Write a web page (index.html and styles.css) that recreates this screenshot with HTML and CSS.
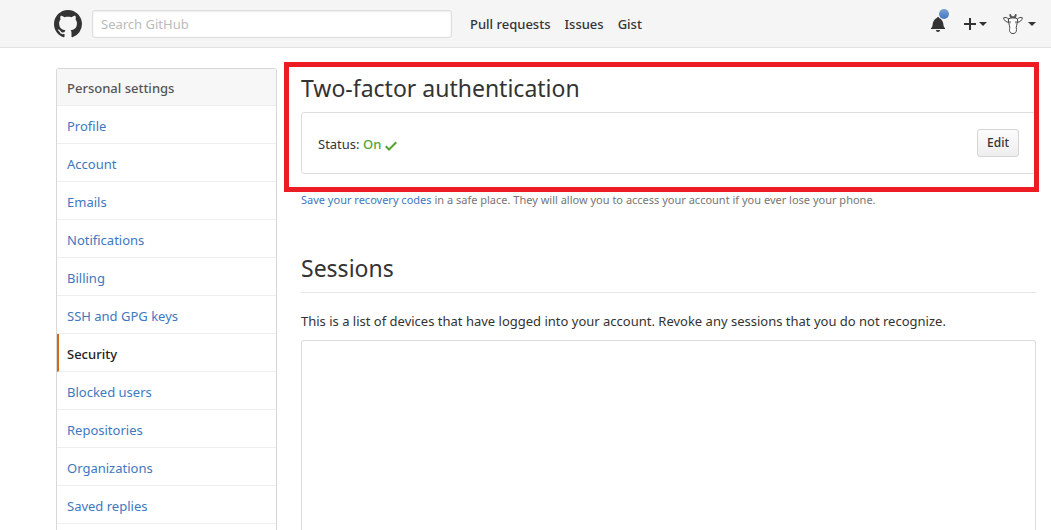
FILE: index.html
```html
<!DOCTYPE html>
<html lang="en">
<head>
<meta charset="utf-8">
<title>Security settings</title>
<link rel="stylesheet" href="styles.css">
</head>
<body>
<header class="topbar">
  <a class="logo" href="#" aria-label="GitHub">
    <svg width="28" height="28" viewBox="0 0 16 16" fill="#333"><path fill-rule="evenodd" d="M8 0C3.58 0 0 3.58 0 8c0 3.54 2.29 6.53 5.47 7.59.4.07.55-.17.55-.38 0-.19-.01-.82-.01-1.49-2.01.37-2.53-.49-2.69-.94-.09-.23-.48-.94-.82-1.13-.28-.15-.68-.52-.01-.53.63-.01 1.08.58 1.23.82.72 1.21 1.87.87 2.33.66.07-.52.28-.87.51-1.07-1.78-.2-3.64-.89-3.64-3.95 0-.87.31-1.59.82-2.15-.08-.2-.36-1.02.08-2.12 0 0 .67-.21 2.2.82.64-.18 1.32-.27 2-.27s1.36.09 2 .27c1.53-1.04 2.2-.82 2.2-.82.44 1.1.16 1.92.08 2.12.51.56.82 1.27.82 2.15 0 3.07-1.87 3.75-3.65 3.95.29.25.54.73.54 1.48 0 1.07-.01 1.93-.01 2.2 0 .21.15.46.55.38A8.01 8.01 0 0 0 16 8c0-4.42-3.58-8-8-8z"/></svg>
  </a>
  <input class="search" type="text" placeholder="Search GitHub" aria-label="Search GitHub">
  <nav class="links">
    <a href="#">Pull requests</a>
    <a href="#">Issues</a>
    <a href="#">Gist</a>
  </nav>
  <div class="user-nav">
    <a class="bell" href="#" aria-label="Notifications">
      <svg width="14" height="16" viewBox="0 0 14 16" fill="#333"><path d="M14 12v1H0v-1l.73-.58c.77-.77.81-2.55 1.19-4.42C2.69 3.23 6 2 6 2c0-.55.45-1 1-1s1 .45 1 1c0 0 3.39 1.23 4.16 5 .38 1.88.42 3.66 1.19 4.42l.66.58H14zm-7 4c1.11 0 2-.89 2-2H5c0 1.11.89 2 2 2z"/></svg>
      <span class="unread"></span>
    </a>
    <button class="menu" type="button" aria-label="Create new">
      <svg width="12" height="12" viewBox="0 0 12 12" fill="#333"><path d="M5 0h2v5h5v2H7v5H5V7H0V5h5z"/></svg>
      <span class="caret"></span>
    </button>
    <button class="menu profile" type="button" aria-label="Your profile">
      <svg width="20" height="22" viewBox="0 0 20 22" fill="#fff" stroke="#444" stroke-linejoin="round" stroke-linecap="round">
        <path d="M5.500 6C4 4.500 2 4 .6 4.800 1 7.300 3 9.300 5.500 9.300zM14.500 6c1.500-1.500 3.500-2 4.900-1.200C19 7.300 17 9.300 14.500 9.300z"/>
        <path d="M5.500 6C7.500 4.200 12.500 4.200 14.500 6c.7 3-1 5.500-1.300 8.500.2 1.500.5 2.500 0 4-.9 2.700-5.500 2.700-6.400 0-.5-1.500-.2-2.500 0-4C6.500 11.500 4.800 9 5.500 6z"/>
        <path d="M8 4.500 7.300 2M12 4.500l.7-2.500M9 4.300h2" stroke="#555" stroke-width="2"/>
        <path d="M7 8.500v1.500M13 8.500v1.500"/>
      </svg>
      <span class="caret"></span>
    </button>
  </div>
</header>
<main class="page">
  <nav class="sidebar" aria-label="Personal settings">
    <h2 class="sidebar-title">Personal settings</h2>
    <a href="#">Profile</a>
    <a href="#">Account</a>
    <a href="#">Emails</a>
    <a href="#">Notifications</a>
    <a href="#">Billing</a>
    <a href="#">SSH and GPG keys</a>
    <a class="selected" href="#" aria-current="page">Security</a>
    <a href="#">Blocked users</a>
    <a href="#">Repositories</a>
    <a href="#">Organizations</a>
    <a href="#">Saved replies</a>
  </nav>
  <div class="content">
    <section class="two-factor">
      <h1 class="title">Two-factor authentication</h1>
      <div class="status-box">
        <span class="status">Status: <span class="on">On</span>
          <svg class="check" width="12" height="16" viewBox="0 0 12 16" fill="#55a532"><path d="M12 5l-8 8-4-4 1.500-1.500L4 10l6.500-6.500z"/></svg></span>
        <button class="btn" type="button">Edit</button>
      </div>
      <div class="highlight"></div>
    </section>
    <p class="note"><a href="#">Save your recovery codes</a> in a safe place. They will allow you to access your account if you ever lose your phone.</p>
    <section class="sessions">
      <h1 class="title ruled">Sessions</h1>
      <p class="intro">This is a list of devices that have logged into your account. Revoke any sessions that you do not recognize.</p>
      <div class="session-list"></div>
    </section>
  </div>
</main>
</body>
</html>
```

FILE: styles.css
```css
* { box-sizing: border-box; }

body {
  margin: 0;
  height: 100vh;
  overflow: hidden;
  display: flex;
  flex-direction: column;
  background: #fff;
  color: #333;
  font: 13px/20px "Noto Sans", "Open Sans", sans-serif;
}

a { color: #4078c0; text-decoration: none; }
h1, h2, p { margin: 0; }
svg { display: block; }

.topbar {
  flex: none;
  display: flex;
  align-items: center;
  height: 48px;
  padding: 0 15px 0 54px;
  background: #f5f5f5;
  border-bottom: 1px solid #e2e2e2;
}
.logo { margin-right: 10px; }
.search {
  width: 360px;
  height: 28px;
  padding: 0 8px;
  border: 1px solid #ddd;
  border-radius: 3px;
  background: #fff;
  box-shadow: inset 0 1px 2px rgba(0, 0, 0, 0.075);
  color: #333;
  font: inherit;
}
.search::placeholder { color: #bbb; opacity: 1; }
.links { display: flex; gap: 14px; margin-left: 18px; }
.links a { color: #333; font-weight: 500; }

.user-nav { display: flex; align-items: center; margin-left: auto; }
.bell { position: relative; margin: 0 19px 0 0; }
.unread {
  position: absolute;
  top: -7px;
  right: -4px;
  width: 10px;
  height: 10px;
  border-radius: 50%;
  background: linear-gradient(#7aa1d4, #4078c0);
}
.menu {
  display: flex;
  align-items: center;
  gap: 3px;
  padding: 0;
  border: 0;
  background: none;
}
.profile { gap: 5px; margin-left: 16px; }
.caret {
  border: 4px solid transparent;
  border-top-color: #333;
  border-bottom: 0;
}

.page {
  flex: 1;
  min-height: 0;
  display: flex;
  gap: 24px;
  padding: 20px 15px 0 56px;
}
.sidebar {
  flex: none;
  width: 221px;
  border: 1px solid #d8d8d8;
  border-bottom: 0;
  border-radius: 3px 3px 0 0;
}
.sidebar-title, .sidebar a {
  display: block;
  padding: 10px 10px 7px;
  border-bottom: 1px solid #eee;
}
.sidebar-title {
  padding: 9px 10px 7px;
  background: #f7f7f7;
  color: #555;
  font-size: 13px;
  font-weight: 500;
}
.sidebar .selected {
  padding-left: 8px;
  border-left: 2px solid #d26911;
  color: #222;
  font-weight: 500;
}

.content { flex: 1; display: flex; flex-direction: column; min-width: 0; }
.two-factor { position: relative; }
.title { font-size: 23px; line-height: 40px; font-weight: 400; }
.status-box {
  display: flex;
  align-items: center;
  justify-content: space-between;
  margin-top: 4px;
  padding: 16px;
  border: 1px solid #ddd;
  border-radius: 3px;
}
.status { padding-top: 2px; }
.on { color: #55a532; font-weight: 500; }
.check { display: inline-block; vertical-align: middle; }
.btn {
  height: 28px;
  padding: 0 9px;
  border: 1px solid #d5d5d5;
  border-radius: 3px;
  background: linear-gradient(#fcfcfc, #eee);
  color: #333;
  font: inherit;
  font-size: 12px;
  font-weight: 500;
}
.highlight {
  position: absolute;
  top: -6px;
  right: -3px;
  bottom: -18px;
  left: -17px;
  border: 5px solid #ed1c24;
  pointer-events: none;
}
.note { margin-top: 16px; color: #767676; font-size: 11px; }
.sessions { flex: 1; display: flex; flex-direction: column; margin-top: 38px; }
.ruled { padding-bottom: 4px; border-bottom: 1px solid #e5e5e5; }
.intro { margin: 18px 0 9px; }
.session-list {
  flex: 1;
  border: 1px solid #ddd;
  border-bottom: 0;
  border-radius: 3px 3px 0 0;
}
```
